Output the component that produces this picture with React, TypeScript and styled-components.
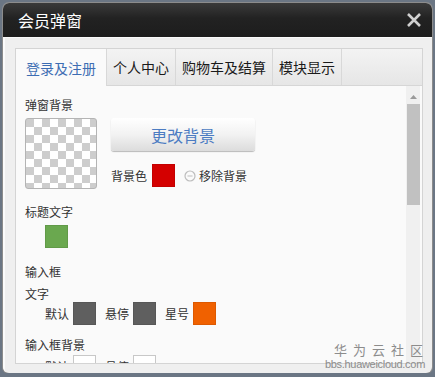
import React from 'react';
import styled, { createGlobalStyle } from 'styled-components';

const GlobalStyle = createGlobalStyle`
  html, body {
    margin: 0;
    padding: 0;
    background: #6b7684;
    font-family: "Noto Sans CJK SC", "Noto Sans", sans-serif;
  }
`;

const Dialog = styled.div`
  position: relative;
  margin: 3px 0 0 3px;
  width: 429px;
  height: 370px;
  border-radius: 6px;
  overflow: hidden;
  background: #efefef;
  display: flex;
  flex-direction: column;
  box-shadow: 0 0 0 1px #8c8c8c;
`;

const Header = styled.div`
  height: 34px;
  flex-shrink: 0;
  display: flex;
  align-items: center;
  justify-content: space-between;
  padding: 0 10px 0 15px;
  background: linear-gradient(#3a3a3a, #222 45%, #1d1d1d);
  color: #fff;
  font-size: 16px;
`;

const CloseButton = styled.button`
  border: none;
  background: none;
  padding: 0;
  width: 16px;
  height: 16px;
  display: flex;
`;

const Body = styled.div`
  flex: 1;
  padding: 10px 9px 0 10px;
  border-top: 1px solid #fafafa;
  border-left: 2px solid #fbfbfb;
`;

const TabBox = styled.div`
  border: 1px solid #d4d4d4;
  background: #fafafa;
  height: 314px;
  display: flex;
  flex-direction: column;
`;

const TabBar = styled.div`
  display: flex;
  height: 36px;
  flex-shrink: 0;
  background: linear-gradient(#f3f3f3, #e6e6e6);
  border-bottom: 1px solid #d6d6d6;
`;

const Tab = styled.div<{ $active?: boolean; $pad: number }>`
  display: flex;
  align-items: center;
  padding: 0 ${p => p.$pad}px;
  font-size: 14px;
  color: ${p => (p.$active ? '#3d6db3' : '#1a1a1a')};
  background: ${p => (p.$active ? '#fafafa' : 'transparent')};
  border-right: 1px solid #d8d8d8;
  margin-bottom: ${p => (p.$active ? '-1px' : '0')};
`;

const Panel = styled.div`
  flex: 1;
  display: flex;
  overflow: hidden;
`;

const Content = styled.div`
  flex: 1;
  padding: 11px 0 0 9px;
  color: #333;
  font-size: 12px;
`;

const Label = styled.div<{ $mt?: number }>`
  line-height: 16px;
  margin-top: ${p => p.$mt ?? 0}px;
`;

const BgRow = styled.div`
  display: flex;
  gap: 14px;
  margin-top: 5px;
`;

const Checker = styled.div`
  width: 70px;
  height: 69px;
  border: 1px solid #b4b4b4;
  border-radius: 3px;
  background: repeating-conic-gradient(#fff 0 25%, #cdcdcd 0 50%) 0 0 / 16px 16px;
`;

const BgActions = styled.div`
  display: flex;
  flex-direction: column;
`;

const ChangeButton = styled.button`
  width: 144px;
  height: 33px;
  border: none;
  border-radius: 3px;
  background: linear-gradient(#ffffff, #f2f2f2 50%, #dcdcdc);
  box-shadow: 0 1px 1px #b8b8b8;
  color: #4c7cc2;
  font-family: inherit;
  font-size: 16px;
`;

const ColorRow = styled.div`
  display: flex;
  align-items: center;
  margin-top: 13px;
  font-size: 12px;
`;

const Swatch = styled.span<{ $color: string; $ml?: number }>`
  display: inline-block;
  width: 21px;
  height: 21px;
  background: ${p => p.$color};
  border: 1px solid ${p => (p.$color === '#ffffff' ? '#c8c8c8' : 'rgba(0,0,0,0.08)')};
  margin-left: ${p => p.$ml ?? 0}px;
`;

const Remove = styled.span`
  display: flex;
  align-items: center;
  gap: 3px;
  margin-left: 9px;
`;

const SwatchRow = styled.div<{ $mt?: number }>`
  display: flex;
  align-items: center;
  padding-left: 20px;
  margin-top: ${p => p.$mt ?? 0}px;
`;

const Item = styled.span`
  display: flex;
  align-items: center;
  gap: 4px;
  margin-right: 9px;
`;

const Scrollbar = styled.div`
  width: 14px;
  margin-right: 2px;
  background: #f0f0f0;
  display: flex;
  flex-direction: column;
  align-items: center;
  padding-top: 4px;
`;

const Arrow = styled.div`
  height: 14px;
  display: flex;
  align-items: center;
  justify-content: center;
`;

const Thumb = styled.div`
  width: 13px;
  height: 101px;
  background: #c1c1c1;
`;

const Watermark = styled.div`
  position: absolute;
  right: 7px;
  bottom: 3px;
  text-align: right;
  color: #8c8c8c;
  line-height: 1;
`;

const WmTop = styled.div`
  font-size: 13px;
  letter-spacing: 6px;
  margin-right: -4px;
`;

const WmBottom = styled.div`
  font-family: "Liberation Sans", Arial, sans-serif;
  font-size: 11px;
  margin-top: 3px;
  letter-spacing: -0.3px;
`;

const tabs = [
  { name: '登录及注册', pad: 10, active: true },
  { name: '个人中心', pad: 6 },
  { name: '购物车及结算', pad: 6 },
  { name: '模块显示', pad: 6 },
];

export default function App() {
  return (
    <>
      <GlobalStyle />
      <Dialog>
        <Header>
          <span>会员弹窗</span>
          <CloseButton>
            <svg width="16" height="16" viewBox="0 0 16 16">
              <path d="M2 2 L14 14 M14 2 L2 14" stroke="#d0d0d0" strokeWidth="2.6" />
            </svg>
          </CloseButton>
        </Header>
        <Body>
          <TabBox>
            <TabBar>
              {tabs.map(t => (
                <Tab key={t.name} $active={t.active} $pad={t.pad}>
                  {t.name}
                </Tab>
              ))}
            </TabBar>
            <Panel>
              <Content>
                <Label>弹窗背景</Label>
                <BgRow>
                  <Checker />
                  <BgActions>
                    <ChangeButton>更改背景</ChangeButton>
                    <ColorRow>
                      背景色
                      <Swatch $color="#d40000" $ml={5} />
                      <Remove>
                        <svg width="12" height="12" viewBox="0 0 12 12">
                          <circle cx="6" cy="6" r="5" fill="none" stroke="#bdbdbd" strokeWidth="1.2" />
                          <path d="M3.5 6 H8.5" stroke="#bdbdbd" strokeWidth="1.2" />
                        </svg>
                        移除背景
                      </Remove>
                    </ColorRow>
                  </BgActions>
                </BgRow>
                <Label $mt={15}>标题文字</Label>
                <SwatchRow $mt={5}>
                  <Swatch $color="#6aa84f" />
                </SwatchRow>
                <Label $mt={16}>输入框</Label>
                <Label $mt={6}>文字</Label>
                <SwatchRow $mt={0}>
                  <Item>默认<Swatch $color="#5f5f5f" /></Item>
                  <Item>悬停<Swatch $color="#5f5f5f" /></Item>
                  <Item>星号<Swatch $color="#f06100" /></Item>
                </SwatchRow>
                <Label $mt={12}>输入框背景</Label>
                <SwatchRow $mt={2}>
                  <Item>默认<Swatch $color="#ffffff" /></Item>
                  <Item>悬停<Swatch $color="#ffffff" /></Item>
                </SwatchRow>
              </Content>
              <Scrollbar>
                <Arrow>
                  <svg width="7" height="4" viewBox="0 0 7 4">
                    <path d="M0 4 L3.5 0 L7 4 Z" fill="#9a9a9a" />
                  </svg>
                </Arrow>
                <Thumb />
              </Scrollbar>
            </Panel>
          </TabBox>
        </Body>
        <Watermark>
          <WmTop>华为云社区</WmTop>
          <WmBottom>bbs.huaweicloud.com</WmBottom>
        </Watermark>
      </Dialog>
    </>
  );
}
